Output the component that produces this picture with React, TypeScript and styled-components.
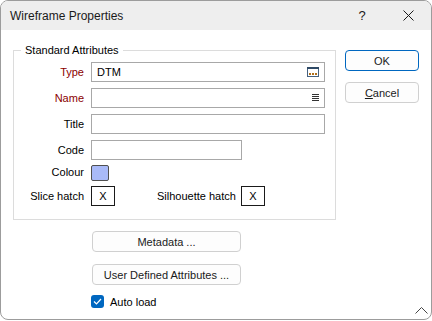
import React from 'react';
import styled, { createGlobalStyle } from 'styled-components';

const GlobalStyle = createGlobalStyle`
  html, body {
    margin: 0;
    padding: 0;
    background: #ffffff;
  }
  body {
    font-family: "Liberation Sans", "Noto Sans", sans-serif;
    font-size: 11px;
    color: #000000;
  }
`;

const Window = styled.div`
  position: relative;
  box-sizing: border-box;
  width: 432px;
  height: 320px;
  border: 1px solid #9c9c9c;
  border-radius: 8px;
  background: #ffffff;
  overflow: hidden;
  display: flex;
  flex-direction: column;
`;

const TitleBar = styled.div`
  height: 29px;
  flex: 0 0 29px;
  background: #eeeeee;
  display: flex;
  align-items: center;
  padding-left: 9px;
`;

const Title = styled.div`
  flex: 1;
  font-size: 12px;
  line-height: 16px;
  color: #1a1a1a;
`;

const CaptionButton = styled.div`
  width: 46px;
  height: 29px;
  display: flex;
  align-items: center;
  justify-content: center;
  font-size: 13px;
  color: #1a1a1a;
`;

const Body = styled.div`
  flex: 1;
  display: flex;
  gap: 9px;
  padding: 12px 12px 0 12px;
`;

const LeftColumn = styled.div`
  display: flex;
  flex-direction: column;
`;

const RightColumn = styled.div`
  display: flex;
  flex-direction: column;
  gap: 11px;
  padding-top: 8px;
`;

const Group = styled.fieldset`
  box-sizing: border-box;
  width: 323px;
  margin: 0;
  padding: 4px 0 13px 0;
  border: 1px solid #dcdcdc;
`;

const Legend = styled.legend`
  margin-left: 7px;
  padding: 0 4px;
  line-height: 16px;
  font-size: 11px;
`;

const FormGrid = styled.div`
  display: grid;
  grid-template-columns: 70px auto;
  column-gap: 7px;
  row-gap: 6px;
  align-items: center;
`;

const Label = styled.div<{ $required?: boolean; $tight?: boolean }>`
  text-align: right;
  line-height: 16px;
  color: ${p => (p.$required ? '#8b0000' : '#000000')};
  margin-top: ${p => (p.$tight ? '-2px' : '0')};
`;

const Field = styled.div<{ $width: number }>`
  box-sizing: border-box;
  width: ${p => p.$width}px;
  height: 20px;
  border: 1px solid #a8a8a8;
  display: flex;
  align-items: center;
  padding: 0 5px;
  line-height: 16px;
`;

const FieldText = styled.span`
  flex: 1;
`;

const Swatch = styled.div`
  box-sizing: border-box;
  width: 18px;
  height: 16px;
  margin-top: -2px;
  margin-bottom: -1px;
  border: 1px solid #505050;
  border-radius: 2px;
  background: #a9baf8;
`;

const HatchRow = styled.div`
  display: flex;
  align-items: center;
`;

const HatchBox = styled.div`
  box-sizing: border-box;
  width: 24px;
  height: 20px;
  border: 1px solid #1a1a1a;
  display: flex;
  align-items: center;
  justify-content: center;
`;

const HatchLabel = styled.span`
  margin-left: 42px;
  margin-right: 5px;
`;

const Button = styled.div<{ $primary?: boolean; $width: number }>`
  box-sizing: border-box;
  width: ${p => p.$width}px;
  height: 21px;
  border: 1px solid ${p => (p.$primary ? '#0067c0' : '#d0d0d0')};
  border-radius: 4px;
  background: #fdfdfd;
  display: flex;
  align-items: center;
  justify-content: center;
  color: #1a1a1a;
`;

const LowerButtons = styled.div`
  display: flex;
  flex-direction: column;
  gap: 12px;
  margin: 11px 0 0 79px;
`;

const CheckRow = styled.div`
  display: flex;
  align-items: center;
  gap: 6px;
  margin: 10px 0 0 78px;
`;

const CheckBox = styled.div`
  width: 13px;
  height: 13px;
  border-radius: 3px;
  background: #0067c0;
  display: flex;
  align-items: center;
  justify-content: center;
`;

const CornerChevron = styled.svg`
  position: absolute;
  right: 3px;
  bottom: 5px;
`;

const Underline = styled.span`
  text-decoration: underline;
`;

const DialogIcon = () => (
  <svg width="12" height="10" viewBox="0 0 12 10">
    <rect x="0.5" y="0.5" width="11" height="9" fill="#ffffff" stroke="#45617f" />
    <rect x="0" y="0" width="12" height="2" fill="#2f4a66" />
    <rect x="2" y="6" width="2" height="2" fill="#b0701c" />
    <rect x="5" y="6" width="2" height="2" fill="#b0701c" />
    <rect x="8" y="6" width="2" height="2" fill="#b0701c" />
  </svg>
);

const ListIcon = () => (
  <svg width="7" height="8" viewBox="0 0 7 8">
    <rect x="0" y="0" width="7" height="1" fill="#333333" />
    <rect x="0" y="2" width="7" height="1" fill="#333333" />
    <rect x="0" y="4" width="7" height="1" fill="#333333" />
    <rect x="0" y="6" width="7" height="1" fill="#333333" />
  </svg>
);

export default function App() {
  return (
    <>
      <GlobalStyle />
      <Window>
        <TitleBar>
          <Title>Wireframe Properties</Title>
          <CaptionButton>?</CaptionButton>
          <CaptionButton>
            <svg width="11" height="11" viewBox="0 0 11 11">
              <path d="M0.5 0.5 L10.5 10.5 M10.5 0.5 L0.5 10.5" stroke="#1a1a1a" strokeWidth="1" />
            </svg>
          </CaptionButton>
        </TitleBar>
        <Body>
          <LeftColumn>
            <Group>
              <Legend>Standard Attributes</Legend>
              <FormGrid>
                <Label $required>Type</Label>
                <Field $width={234}>
                  <FieldText>DTM</FieldText>
                  <DialogIcon />
                </Field>
                <Label $required>Name</Label>
                <Field $width={234}>
                  <FieldText />
                  <ListIcon />
                </Field>
                <Label>Title</Label>
                <Field $width={234} />
                <Label>Code</Label>
                <Field $width={151} />
                <Label $tight>Colour</Label>
                <Swatch />
                <Label>Slice hatch</Label>
                <HatchRow>
                  <HatchBox>X</HatchBox>
                  <HatchLabel>Silhouette hatch</HatchLabel>
                  <HatchBox>X</HatchBox>
                </HatchRow>
              </FormGrid>
            </Group>
            <LowerButtons>
              <Button $width={149}>Metadata ...</Button>
              <Button $width={149}>User Defined Attributes ...</Button>
            </LowerButtons>
            <CheckRow>
              <CheckBox>
                <svg width="9" height="7" viewBox="0 0 9 7">
                  <path d="M1 3.5 L3.5 6 L8 1" fill="none" stroke="#ffffff" strokeWidth="1.2" />
                </svg>
              </CheckBox>
              <span>Auto load</span>
            </CheckRow>
          </LeftColumn>
          <RightColumn>
            <Button $primary $width={74}>OK</Button>
            <Button $width={74}>
              <span><Underline>C</Underline>ancel</span>
            </Button>
          </RightColumn>
        </Body>
        <CornerChevron width="13" height="7" viewBox="0 0 13 7">
          <path d="M0.5 6.5 L6.5 0.5 L12.5 6.5" fill="none" stroke="#444444" strokeWidth="1" />
        </CornerChevron>
      </Window>
    </>
  );
}
